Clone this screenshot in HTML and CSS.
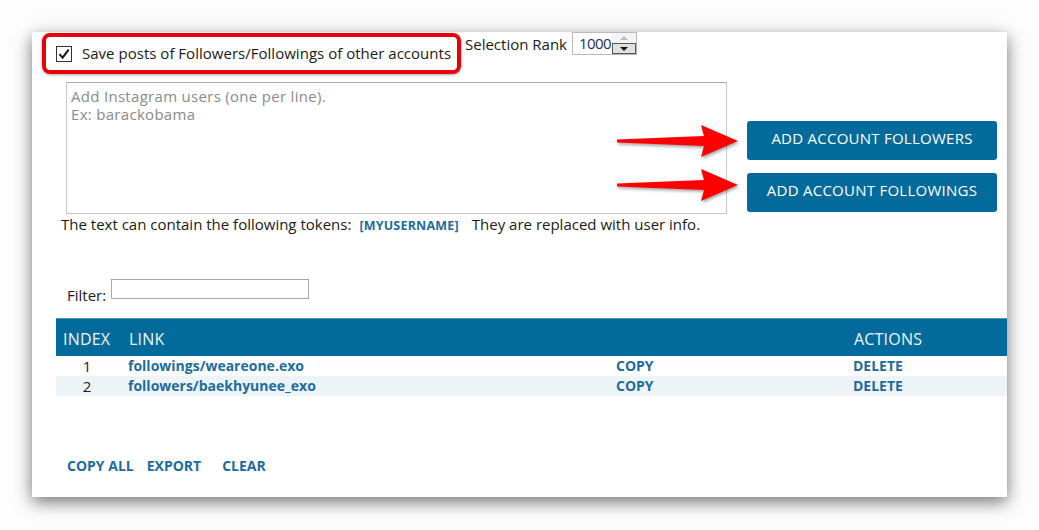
FILE: index.html
```html
<!DOCTYPE html>
<html>
<head>
<meta charset="utf-8">
<link rel="stylesheet" href="styles.css">
</head>
<body>
<div class="panel">
  <div class="top-row">
    <label class="save-box">
      <span class="check"><svg width="12" height="12" viewBox="0 0 12 12"><path d="M1.5 6.2 L4.6 9.6 L10.6 1.6" fill="none" stroke="#111" stroke-width="2"/></svg></span>
      <span class="save-text">Save posts of Followers/Followings of other accounts</span>
    </label>
    <span class="rank-label">Selection Rank</span>
    <div class="spinner">
      <span class="spin-value">1000</span>
      <div class="spin-btns">
        <span class="spin-up"><svg width="10" height="6" viewBox="0 0 10 6"><path d="M1 5 L5 1 L9 5 Z" fill="#bbb"/></svg></span>
        <span class="spin-down"><svg width="10" height="6" viewBox="0 0 10 6"><path d="M1 1 L5 5 L9 1 Z" fill="#111"/></svg></span>
      </div>
    </div>
  </div>

  <div class="input-row">
    <div class="textarea"><div class="ph">Add Instagram users (one per line).</div><div class="ph">Ex: barackobama</div></div>
    <div class="btn-col">
      <button class="btn">ADD ACCOUNT FOLLOWERS</button>
      <button class="btn">ADD ACCOUNT FOLLOWINGS</button>
    </div>
  </div>

  <div class="tokens">The text can contain the following tokens:<span class="token">[MYUSERNAME]</span>They are replaced with user info.</div>

  <div class="filter-row">
    <span class="filter-label">Filter:</span>
    <span class="filter-input"></span>
  </div>

  <div class="table">
    <div class="thead">
      <span class="hc hc-index">INDEX</span>
      <span class="hc">LINK</span>
      <span class="hc"></span>
      <span class="hc">ACTIONS</span>
    </div>
    <div class="trow">
      <span class="c-index">1</span>
      <span class="c-link">followings/weareone.exo</span>
      <span class="c-link">COPY</span>
      <span class="c-link">DELETE</span>
    </div>
    <div class="trow alt">
      <span class="c-index">2</span>
      <span class="c-link">followers/baekhyunee_exo</span>
      <span class="c-link">COPY</span>
      <span class="c-link">DELETE</span>
    </div>
  </div>

  <div class="footer">
    <span class="f-link">COPY ALL</span>
    <span class="f-link">EXPORT</span>
    <span class="f-link">CLEAR</span>
  </div>

  <svg class="arrow arrow-1" width="128" height="36" viewBox="0 0 128 36"><path d="M1 16.5 L88 13 L85 2 L122 18 L85 34 L88 23 L1 19.5 Z" fill="#f00"/></svg>
  <svg class="arrow arrow-2" width="128" height="36" viewBox="0 0 128 36"><path d="M1 16.5 L88 13 L85 2 L122 18 L85 34 L88 23 L1 19.5 Z" fill="#f00"/></svg>
</div>
</body>
</html>
```

FILE: styles.css
```css
html, body {
  margin: 0;
  padding: 0;
  background: #fdfdfd;
}
body {
  width: 1039px;
  height: 530px;
  overflow: hidden;
  font-family: "Open Sans", "Noto Sans", sans-serif;
  font-size: 15px;
  color: #1a1a1a;
}
.panel {
  position: relative;
  margin: 32px 0 0 32px;
  width: 975px;
  height: 465px;
  background: #fff;
  box-shadow: 0 5px 16px rgba(0,0,0,0.55);
  display: flex;
  flex-direction: column;
}
.top-row {
  display: flex;
  align-items: flex-start;
  height: 50px;
}
.save-box {
  margin: 1px 0 0 10px;
  width: 419px;
  height: 41px;
  box-sizing: border-box;
  border: 4px solid #e8000a;
  border-radius: 8px;
  box-shadow: 0 1px 3px rgba(0,0,0,0.35);
  display: flex;
  align-items: center;
  padding-left: 10px;
  gap: 10px;
}
.check {
  width: 14px;
  height: 14px;
  border: 1px solid #333;
  display: flex;
  align-items: center;
  justify-content: center;
  background: #fff;
}
.save-text {
  font-size: 15px;
  letter-spacing: 0.02px;
  white-space: nowrap;
  margin-top: -2px;
}
.rank-label {
  margin: 2px 0 0 4px;
  white-space: nowrap;
}
.spinner {
  margin-left: 5px;
  width: 65px;
  height: 23px;
  box-sizing: border-box;
  border: 1px solid #b9b9b9;
  display: flex;
}
.spin-value {
  flex: 1;
  padding: 0 0 0 6px;
  color: #1b2f5a;
  font-size: 15px;
  line-height: 20px;
  letter-spacing: -0.6px;
}
.spin-btns {
  width: 24px;
  display: flex;
  flex-direction: column;
}
.spin-up {
  height: 10px;
  display: flex;
  align-items: center;
  justify-content: center;
  background: #f4f4f4;
}
.spin-down {
  flex: 1;
  border: 1px solid #555;
  background: #e2e2e2;
  display: flex;
  align-items: center;
  justify-content: center;
}
.input-row {
  display: flex;
  margin-left: 34px;
}
.textarea {
  width: 661px;
  height: 132px;
  box-sizing: border-box;
  border: 1px solid #c8c8c8;
  border-top-color: #aaa;
  padding: 4px 4px;
  color: #8a8a8a;
  font-size: 15px;
  line-height: 18px;
  letter-spacing: 0.3px;
}
.ph {
  height: 18px;
  line-height: 18px;
}
.btn-col {
  margin: 39px 0 0 20px;
  display: flex;
  flex-direction: column;
  gap: 13px;
}
.btn {
  width: 250px;
  height: 39px;
  border: none;
  border-radius: 3px;
  background: #036b9b;
  color: #fff;
  font-family: inherit;
  font-size: 15px;
  letter-spacing: 0.25px;
  padding: 0 0 5px 0;
}
.tokens {
  margin: 0 0 0 29px;
  height: 20px;
  line-height: 20px;
  white-space: nowrap;
  letter-spacing: 0;
}
.token {
  color: #1c6c9d;
  font-weight: bold;
  font-size: 12.5px;
  letter-spacing: 0.2px;
  margin: 0 13px 0 8px;
}
.filter-row {
  margin: 45px 0 0 35px;
  display: flex;
  align-items: flex-start;
  gap: 5px;
}
.filter-label {
  line-height: 20px;
  padding-top: 6px;
}
.filter-input {
  width: 198px;
  height: 20px;
  box-sizing: border-box;
  border: 1px solid #a8a8a8;
}
.table {
  margin: 13px 0 0 24px;
}
.thead, .trow {
  display: grid;
  grid-template-columns: 62px 488px 237px 1fr;
}
.thead {
  height: 38px;
  background: #036b9b;
  border-top: 1px solid #4a93ba;
  box-sizing: border-box;
  align-items: end;
  padding-bottom: 6px;
  color: #eef5f9;
  font-size: 16px;
  letter-spacing: 0.2px;
}
.hc {
  padding-left: 11px;
}
.hc-index {
  padding-left: 7px;
}
.trow {
  height: 20px;
  line-height: 20px;
}
.trow.alt {
  background: #edf4f7;
}
.c-index {
  text-align: center;
  color: #1a1a1a;
}
.c-link {
  padding-left: 10px;
  color: #1c6c9d;
  font-weight: bold;
  font-size: 14px;
}
.footer {
  margin: 60px 0 0 35px;
  display: flex;
  gap: 13px;
}
.f-link {
  color: #1c6c9d;
  font-weight: bold;
  font-size: 14px;
}
.f-link:last-child {
  margin-left: 8px;
}
.arrow {
  position: absolute;
  left: 584px;
  filter: drop-shadow(1px 2px 1.5px rgba(0,0,0,0.35));
}
.arrow-1 {
  top: 91px;
}
.arrow-2 {
  top: 135px;
}
```
